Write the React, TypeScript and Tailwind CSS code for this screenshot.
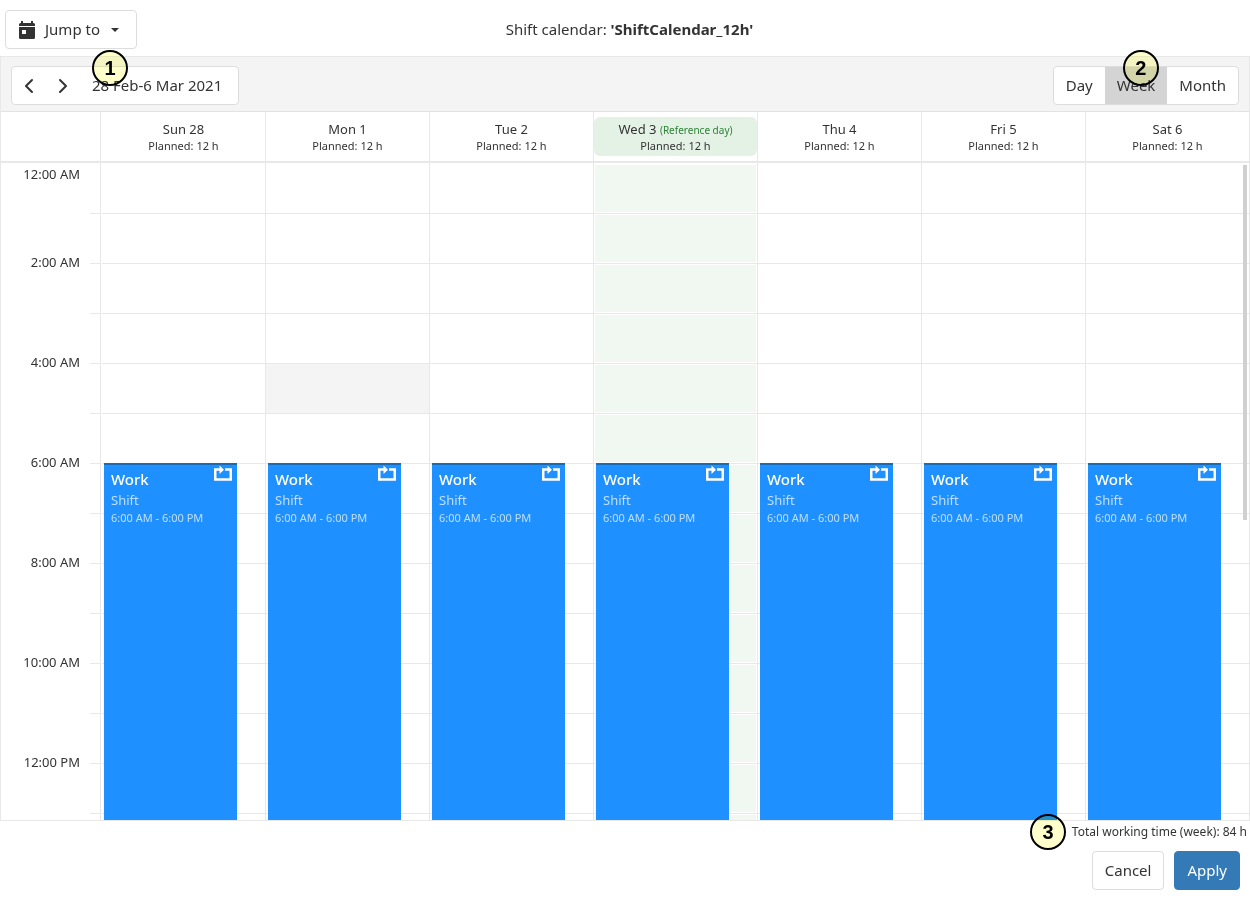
import React, { useState } from 'react';
import { ChevronLeft, ChevronRight } from 'lucide-react';
import clsx from 'clsx';

const days = ['Sun 28', 'Mon 1', 'Tue 2', 'Wed 3', 'Thu 4', 'Fri 5', 'Sat 6'];
const hours = Array.from({ length: 24 }, (_, i) => i);
const views = ['Day', 'Week', 'Month'];

const REFERENCE_DAY = 3;

function hourLabel(hour: number) {
  return `${hour % 12 || 12}:00 ${hour < 12 ? 'AM' : 'PM'}`;
}

function Marker({ value, className }: { value: number; className: string }) {
  return (
    <span
      className={clsx(
        'pointer-events-none absolute z-20 flex h-9 w-9 items-center justify-center rounded-full border-2 border-black bg-[#ffffcc] font-["Liberation_Sans",sans-serif] text-xl font-bold text-black mix-blend-multiply',
        className
      )}
    >
      {value}
    </span>
  );
}

function CalendarIcon() {
  return (
    <svg width="16" height="18" viewBox="0 0 16 18" fill="currentColor">
      <path d="M2 0h2v2h8V0h2v2h.5A1.5 1.5 0 0 1 16 3.5V5H0V3.5A1.5 1.5 0 0 1 1.5 2H2z" />
      <path fillRule="evenodd" d="M0 6h16v10.5a1.5 1.5 0 0 1-1.5 1.5h-13A1.5 1.5 0 0 1 0 16.5zM3 9v4h4V9z" />
    </svg>
  );
}

function ShiftIcon() {
  return (
    <svg width="18" height="16" viewBox="0 0 18 16" className="absolute top-0 right-[5px]">
      <path d="M6 4.5H1.25v10h15.5v-10H11" fill="none" stroke="white" strokeWidth="2.5" />
      <path d="M5.5 0.5l4.5 4.25-4.5 4.25z" fill="white" />
    </svg>
  );
}

function ShiftEvent() {
  return (
    <div className="absolute top-[300px] right-7 left-0.5 h-[600px] border-t-2 border-[#1b6bb3] bg-[#1e90ff] px-[7px] py-0.5 text-white">
      <ShiftIcon />
      <div className="text-[15px] leading-6 font-medium">Work</div>
      <div className="text-[13px] leading-[18px] text-white/70">Shift</div>
      <div className="text-[11px] leading-[18px] whitespace-nowrap text-white/70">6:00 AM - 6:00 PM</div>
    </div>
  );
}

export default function App() {
  const [view, setView] = useState('Week');

  return (
    <div className="flex h-screen flex-col overflow-hidden bg-white font-['Noto_Sans','Open_Sans',sans-serif] text-[15px] text-[#333]">
      <header className="grid grid-cols-[1fr_auto_1fr] items-center pt-2.5 pb-[7px] pl-[9px]">
        <button className="-ml-1 flex h-[39px] items-center justify-self-start rounded border border-[#ddd] bg-white px-[13px]">
          <CalendarIcon />
          <span className="ml-2.5">Jump to</span>
          <span className="mr-1 ml-[11px] border-x-4 border-t-4 border-x-transparent border-t-[#333]" />
        </button>
        <h1>
          Shift calendar: <b>'ShiftCalendar_12h'</b>
        </h1>
      </header>

      <main className="flex min-h-0 flex-1 flex-col border border-[#e8e8e8]">
        {/* Toolbar */}
        <div className="flex items-center justify-between border-b border-[#e2e2e2] bg-[#f4f4f4] px-2.5 pt-[9px] pb-1.5">
          <div className="relative flex h-[39px] items-center rounded border border-[#ddd] bg-white">
            <button aria-label="Previous week" className="flex h-full w-[34px] items-center justify-center">
              <ChevronLeft size={24} strokeWidth={2} />
            </button>
            <button aria-label="Next week" className="flex h-full w-[34px] items-center justify-center">
              <ChevronRight size={24} strokeWidth={2} />
            </button>
            <button className="h-full pr-4 pl-3">28 Feb-6 Mar 2021</button>
            <Marker value={1} className="-top-[17px] left-20" />
          </div>
          <div className="relative flex h-[39px] rounded border border-[#ddd] bg-white">
            {views.map((v) => (
              <button key={v} onClick={() => setView(v)} className={clsx('px-3', view === v && 'bg-[#d4d4d4]')}>
                {v}
              </button>
            ))}
            <Marker value={2} className="-top-[17px] left-[69px]" />
          </div>
        </div>

        {/* Day headings */}
        <div className="flex border-b-2 border-[#e8e8e8]">
          <div className="w-[100px] shrink-0 border-r border-[#e8e8e8]" />
          <div className="grid flex-1 grid-cols-7">
            {days.map((day, i) => (
              <div key={day} className="border-l border-[#e8e8e8] py-[5px] text-center first:border-transparent">
                <div className={clsx('rounded-md pt-1 pb-0.5', i === REFERENCE_DAY && 'bg-[#e4f2e6]')}>
                  <div className="text-[13px] leading-4">
                    {day}{' '}
                    {i === REFERENCE_DAY && (
                      <span className="text-[10px] leading-none text-[#2e8036]">(Reference day)</span>
                    )}
                  </div>
                  <div className="text-[11px] leading-[17px]">Planned: 12 h</div>
                </div>
              </div>
            ))}
          </div>
        </div>

        {/* Time grid */}
        <div className="relative min-h-0 flex-1">
          <div className="flex h-full overflow-y-auto [scrollbar-width:none]">
            <div className="h-[1200px] w-[100px] shrink-0 border-r border-[#e8e8e8]">
              {hours.map((hour) => (
                <div key={hour} className="flex h-[50px] items-start justify-end">
                  {hour % 2 === 0 && (
                    <span className={clsx('mr-2.5 text-[13px] leading-5', hour === 0 ? 'mt-px' : '-mt-[11px]')}>
                      {hourLabel(hour)}
                    </span>
                  )}
                  <span className={clsx('w-2.5', hour > 0 && 'border-t border-[#e8e8e8]')} />
                </div>
              ))}
            </div>
            <div className="grid h-[1200px] flex-1 grid-cols-7">
              {days.map((day, i) => (
                <div key={day} className="relative border-l border-[#e8e8e8] first:border-transparent">
                  {hours.map((hour) => (
                    <div
                      key={hour}
                      className={clsx(
                        'h-[50px] border-t border-[#e8e8e8] first:border-transparent',
                        i === REFERENCE_DAY && 'p-px',
                        i === 1 && hour === 4 && 'bg-[#f4f4f4]'
                      )}
                    >
                      {i === REFERENCE_DAY && <div className="h-full bg-[#f1f8f1]" />}
                    </div>
                  ))}
                  <ShiftEvent />
                </div>
              ))}
            </div>
          </div>
          <div className="absolute top-0.5 right-0.5 h-[54%] w-1 bg-[#d0d0d0]" />
        </div>
      </main>

      <footer className="px-[3px] pb-2.5">
        <div className="flex justify-end">
          <div className="relative text-xs leading-[22px]">
            Total working time (week): 84 h
            <Marker value={3} className="-top-[7px] right-[181px]" />
          </div>
        </div>
        <div className="mt-2 flex justify-end gap-2.5 pr-[7px]">
          <button className="h-[39px] rounded border border-[#ddd] bg-white px-3">Cancel</button>
          <button className="h-[39px] rounded border border-[#337ab7] bg-[#337ab7] px-3 text-white">Apply</button>
        </div>
      </footer>
    </div>
  );
}
